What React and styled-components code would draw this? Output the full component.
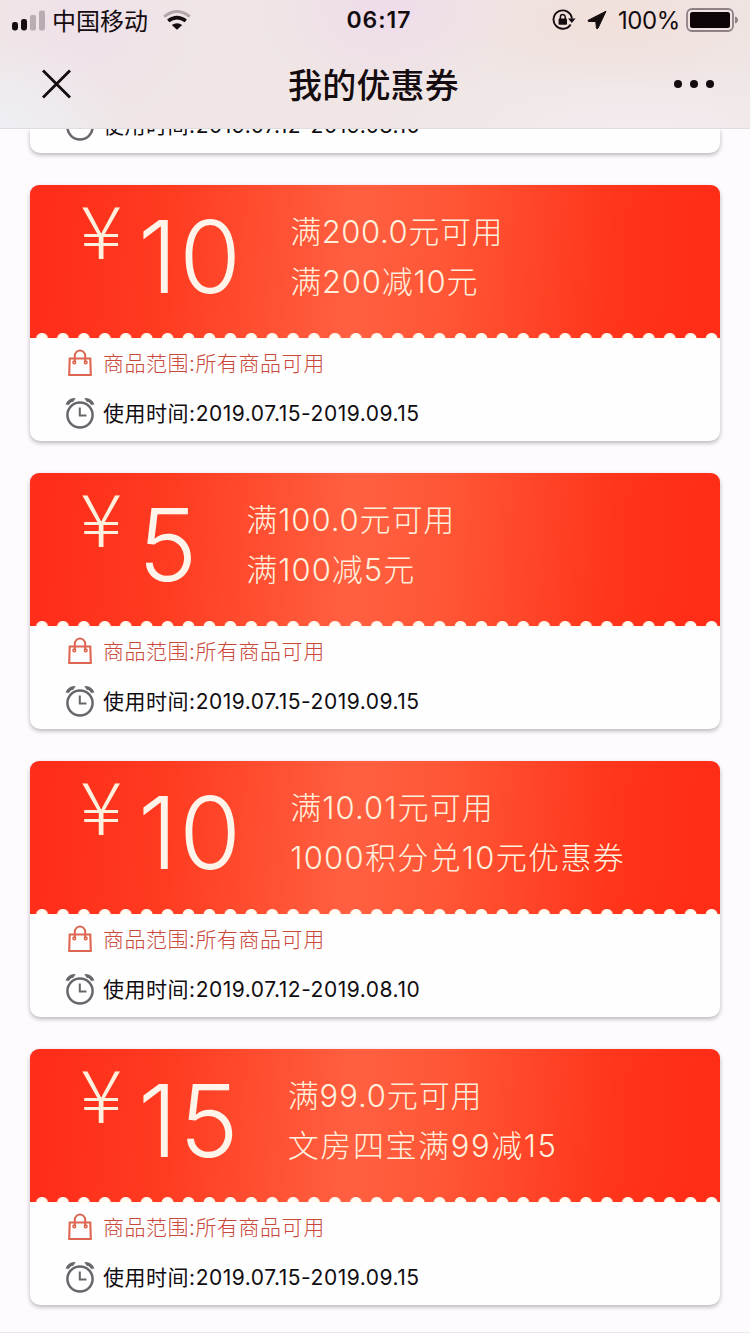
import styled, { createGlobalStyle } from 'styled-components';

const GlobalStyle = createGlobalStyle`
  * {
    box-sizing: border-box;
  }

  body {
    margin: 0;
    background: #fdfbfe;
    font-family: Inter, 'Noto Sans CJK SC', sans-serif;
  }
`;

const Screen = styled.div`
  width: 750px;
  height: 1334px;
  overflow: hidden;
  background: #fdfbfe;
`;

const Header = styled.header`
  height: 129px;
  border-bottom: 1px solid #e2dcde;
  color: #150c10;
  background:
    radial-gradient(ellipse 130px 90px at 385px 10px, #efdcea 0%, transparent 100%),
    radial-gradient(ellipse 190px 70px at 610px 20px, #f1dfda 0%, transparent 100%),
    radial-gradient(ellipse 130px 90px at 0 128px, #eeeff5 0%, transparent 100%),
    radial-gradient(ellipse 120px 100px at 85px 30px, #efe1ea 0%, transparent 100%),
    radial-gradient(ellipse 260px 70px at 640px 128px, #f3ebee 0%, transparent 100%),
    #efe6e5;
`;

const StatusBar = styled.div`
  display: grid;
  grid-template-columns: 1fr auto 1fr;
  align-items: center;
  height: 40px;
  padding: 0 12px;
  font-size: 24px;
`;

const StatusGroup = styled.div`
  display: flex;
  align-items: center;
  justify-content: ${props => (props.$end ? 'flex-end' : 'flex-start')};
`;

const Carrier = styled.span`
  margin: 0 15px 0 6px;
  padding-top: 3px;
  line-height: 37px;
`;

const Clock = styled.span`
  margin-left: 8px;
  font-size: 23px;
  font-weight: 600;
  letter-spacing: 1px;
`;

const Percent = styled.span`
  margin: 1px 6px 0 11px;
  font-size: 24px;
  letter-spacing: -0.4px;
`;

const TitleBar = styled.div`
  display: grid;
  grid-template-columns: 1fr auto 1fr;
  align-items: center;
  height: 88px;
  padding: 0 35px 0 41px;
`;

const Title = styled.h1`
  margin: 0 0 0 -9px;
  padding-top: 3px;
  font-size: 34px;
  font-weight: 500;
  line-height: 50px;
  letter-spacing: 0.2px;
`;

const MoreIcon = styled.svg`
  justify-self: end;
`;

const List = styled.main`
  display: flex;
  flex-direction: column;
  gap: 32px;
  height: 1204px;
  padding: 0 30px;
  overflow: hidden;
  border-bottom: 1px solid #ece9ec;
`;

const Card = styled.article`
  display: flex;
  flex-direction: column;
  flex-shrink: 0;
  justify-content: flex-end;
  height: ${props => props.$height || 256}px;
  border-radius: ${props => (props.$height ? '0 0 10px 10px' : '10px')};
  background: #fffeff;
  box-shadow: 0 2px 4px rgba(60, 45, 60, 0.34);
`;

const Banner = styled.div`
  display: flex;
  height: 154px;
  padding-left: 50px;
  border-radius: 9px 9px 0 0;
  color: #fff0dd;
  background:
    radial-gradient(circle at 50% 100%, #fffcf4 5.5px, transparent 6.5px) 1.6px 100% / 20.93px 8px repeat-x,
    linear-gradient(#fffaf4, #fffaf4) 0 100% / 100% 1px no-repeat,
    linear-gradient(94deg, #ff2d1a 3%, #ff3b20 20%, #ff6041 47%, #ff5636 60%, #ff351b 84%, #ff2c16 98%);
`;

const Yen = styled.span`
  width: 58px;
  font-family: 'Noto Sans CJK SC', sans-serif;
  font-size: 72px;
  font-weight: 200;
  line-height: 86px;
  transform: scaleX(1.1);
  transform-origin: left;
`;

const Amount = styled.span`
  color: #fff4ea;
  font-size: 100px;
  font-weight: 300;
  letter-spacing: 2px;
  line-height: 144px;
`;

const Terms = styled.div`
  margin-left: 47px;
  padding-top: 22px;
  font-size: 31px;
  font-weight: 300;
  line-height: 50px;
  white-space: nowrap;
`;

const TermLine = styled.div`
  letter-spacing: ${props => props.$tracking}px;
`;

const InfoRow = styled.div`
  display: flex;
  flex-shrink: 0;
  align-items: center;
  height: 50px;
  padding: 0 0 2px 35px;
  gap: 8px;
  color: ${props => props.$color};
  font-size: 21px;
  font-weight: ${props => props.$weight || 400};
  letter-spacing: 0.52px;
  white-space: nowrap;
`;

const DateRow = styled(InfoRow)`
  height: 52px;
  padding-bottom: 4px;
`;

const InfoText = styled.span`
  margin-top: -3px;
`;

const coupons = [
  {
    amount: 10,
    terms: [{ text: '满200.0元可用', tracking: 0.6 }, { text: '满200减10元', tracking: 0.8 }],
    dates: '2019.07.15-2019.09.15',
  },
  {
    amount: 5,
    terms: [{ text: '满100.0元可用', tracking: 0.9 }, { text: '满100减5元', tracking: 1 }],
    dates: '2019.07.15-2019.09.15',
  },
  {
    amount: 10,
    terms: [{ text: '满10.01元可用', tracking: 1.1 }, { text: '1000积分兑10元优惠券', tracking: 1.3 }],
    dates: '2019.07.12-2019.08.10',
  },
  {
    amount: 15,
    terms: [{ text: '满99.0元可用', tracking: 0.9 }, { text: '文房四宝满99减15', tracking: 1.6 }],
    dates: '2019.07.15-2019.09.15',
  },
];

function SignalIcon() {
  return (
    <svg width="34" height="22" viewBox="0 0 34 22" fill="#150c10">
      <rect x="0" y="13" width="6" height="8.5" rx="2.4" />
      <rect x="9" y="10" width="6" height="11.5" rx="2.4" />
      <rect x="18" y="6" width="6" height="15.5" rx="2" fill="#b9adb3" />
      <rect x="27" y="1.5" width="6" height="20" rx="2" fill="#b9adb3" />
    </svg>
  );
}

function WifiIcon() {
  return (
    <svg width="28" height="20" viewBox="0 0 28 20" fill="none">
      <path d="M1.2 6.6Q14-3.6 26.8 6.6" stroke="#b3a7ac" strokeWidth="3" />
      <path d="M5.2 10.9Q14 4.2 22.8 10.9" stroke="#150c10" strokeWidth="3.6" />
      <path d="M8.8 15Q14 11.4 19.2 15L14 19.8Z" fill="#150c10" />
    </svg>
  );
}

function RotationLockIcon() {
  return (
    <svg width="24" height="22" viewBox="0 0 24 22" fill="none" stroke="#150c10" strokeWidth="1.9">
      <path d="M18.6 15.4A9.2 9.2 0 1 1 19.9 9.6" />
      <path d="M16 9.6H23.6L19.8 14Z" fill="#150c10" stroke="none" />
      <rect x="6.6" y="9.6" width="8.4" height="6.2" rx="0.8" fill="#150c10" stroke="none" />
      <path d="M8.4 10V7.9a2.4 2.4 0 0 1 4.8 0V10" strokeWidth="1.5" />
    </svg>
  );
}

const LocationIcon = styled.svg`
  margin-left: 11px;
`;

function BatteryIcon() {
  return (
    <svg width="52" height="24" viewBox="0 0 52 24" fill="none">
      <rect x="1" y="1" width="46" height="22" rx="5" stroke="#8d8186" strokeWidth="1.8" />
      <rect x="4" y="4" width="40" height="16" rx="2.5" fill="#0d0508" />
      <path d="M49 8.5Q52 9.5 52 12T49 15.5Z" fill="#8d8186" />
    </svg>
  );
}

function BagIcon() {
  return (
    <svg width="30" height="28" viewBox="0 0 30 28" fill="none" stroke="#dd6552" strokeWidth="2.1">
      <path d="M4.7 9.5H25.3L25.8 26H4.2Z" />
      <path d="M9.8 12.6V6.8a5.2 5.2 0 0 1 10.4 0V12.6" strokeWidth="2" />
      <circle cx="9.3" cy="13.4" r="1.3" strokeWidth="1.6" />
      <circle cx="20.7" cy="13.4" r="1.3" strokeWidth="1.6" />
    </svg>
  );
}

function AlarmIcon() {
  return (
    <svg width="30" height="32" viewBox="0 0 30 32" fill="none" stroke="#68656b" strokeWidth="2.5">
      <circle cx="15" cy="18" r="12.6" />
      <path d="M14.8 10.5V18.6H21.5" strokeWidth="2" />
      <path d="M.6 7.6Q3.4 .2 10.6 1L8.8 4.2Q5.6 5 3.6 8ZM29.4 7.6Q26.6 .2 19.4 1L21.2 4.2Q24.4 5 26.4 8Z" fill="#68656b" stroke="none" />
    </svg>
  );
}

function ValidDates({ dates }) {
  return (
    <DateRow $color="#100d10">
      <AlarmIcon />
      <InfoText>使用时间:{dates}</InfoText>
    </DateRow>
  );
}

function Coupon({ amount, terms, dates }) {
  return (
    <Card>
      <Banner>
        <Yen>¥</Yen>
        <Amount>{amount}</Amount>
        <Terms>
          {terms.map(({ text, tracking }) => (
            <TermLine key={text} $tracking={tracking}>{text}</TermLine>
          ))}
        </Terms>
      </Banner>
      <InfoRow $color="#c8483a" $weight={300}>
        <BagIcon />
        <InfoText>商品范围:所有商品可用</InfoText>
      </InfoRow>
      <ValidDates dates={dates} />
    </Card>
  );
}

function App() {
  return (
    <Screen>
      <GlobalStyle />
      <Header>
        <StatusBar>
          <StatusGroup>
            <SignalIcon />
            <Carrier>中国移动</Carrier>
            <WifiIcon />
          </StatusGroup>
          <Clock>06:17</Clock>
          <StatusGroup $end>
            <RotationLockIcon />
            <LocationIcon width="20" height="20" viewBox="0 0 20 20" fill="#150c10">
              <path d="M19 1.2 1 10.4Q.6 11.4 1.8 11.4L8.8 11.5 9.4 18.2Q10 19.4 11 18.2Z" stroke="#150c10" strokeLinejoin="round" />
            </LocationIcon>
            <Percent>100%</Percent>
            <BatteryIcon />
          </StatusGroup>
        </StatusBar>
        <TitleBar>
          <svg width="31" height="30" viewBox="0 0 31 30" stroke="#150c10" strokeWidth="2.8">
            <path d="M2 1.5 29 28.5M29 1.5 2 28.5" />
          </svg>
          <Title>我的优惠券</Title>
          <MoreIcon width="42" height="10" viewBox="0 0 42 10" fill="#150c10">
            <circle cx="5" cy="5" r="4" />
            <circle cx="21" cy="5" r="4" />
            <circle cx="37" cy="5" r="4" />
          </MoreIcon>
        </TitleBar>
      </Header>
      <List>
        {/* tail of the coupon scrolled under the header */}
        <Card $height={24}>
          <ValidDates dates="2019.07.12-2019.08.10" />
        </Card>
        {coupons.map((coupon, index) => (
          <Coupon key={index} {...coupon} />
        ))}
      </List>
    </Screen>
  );
}

export default App;
